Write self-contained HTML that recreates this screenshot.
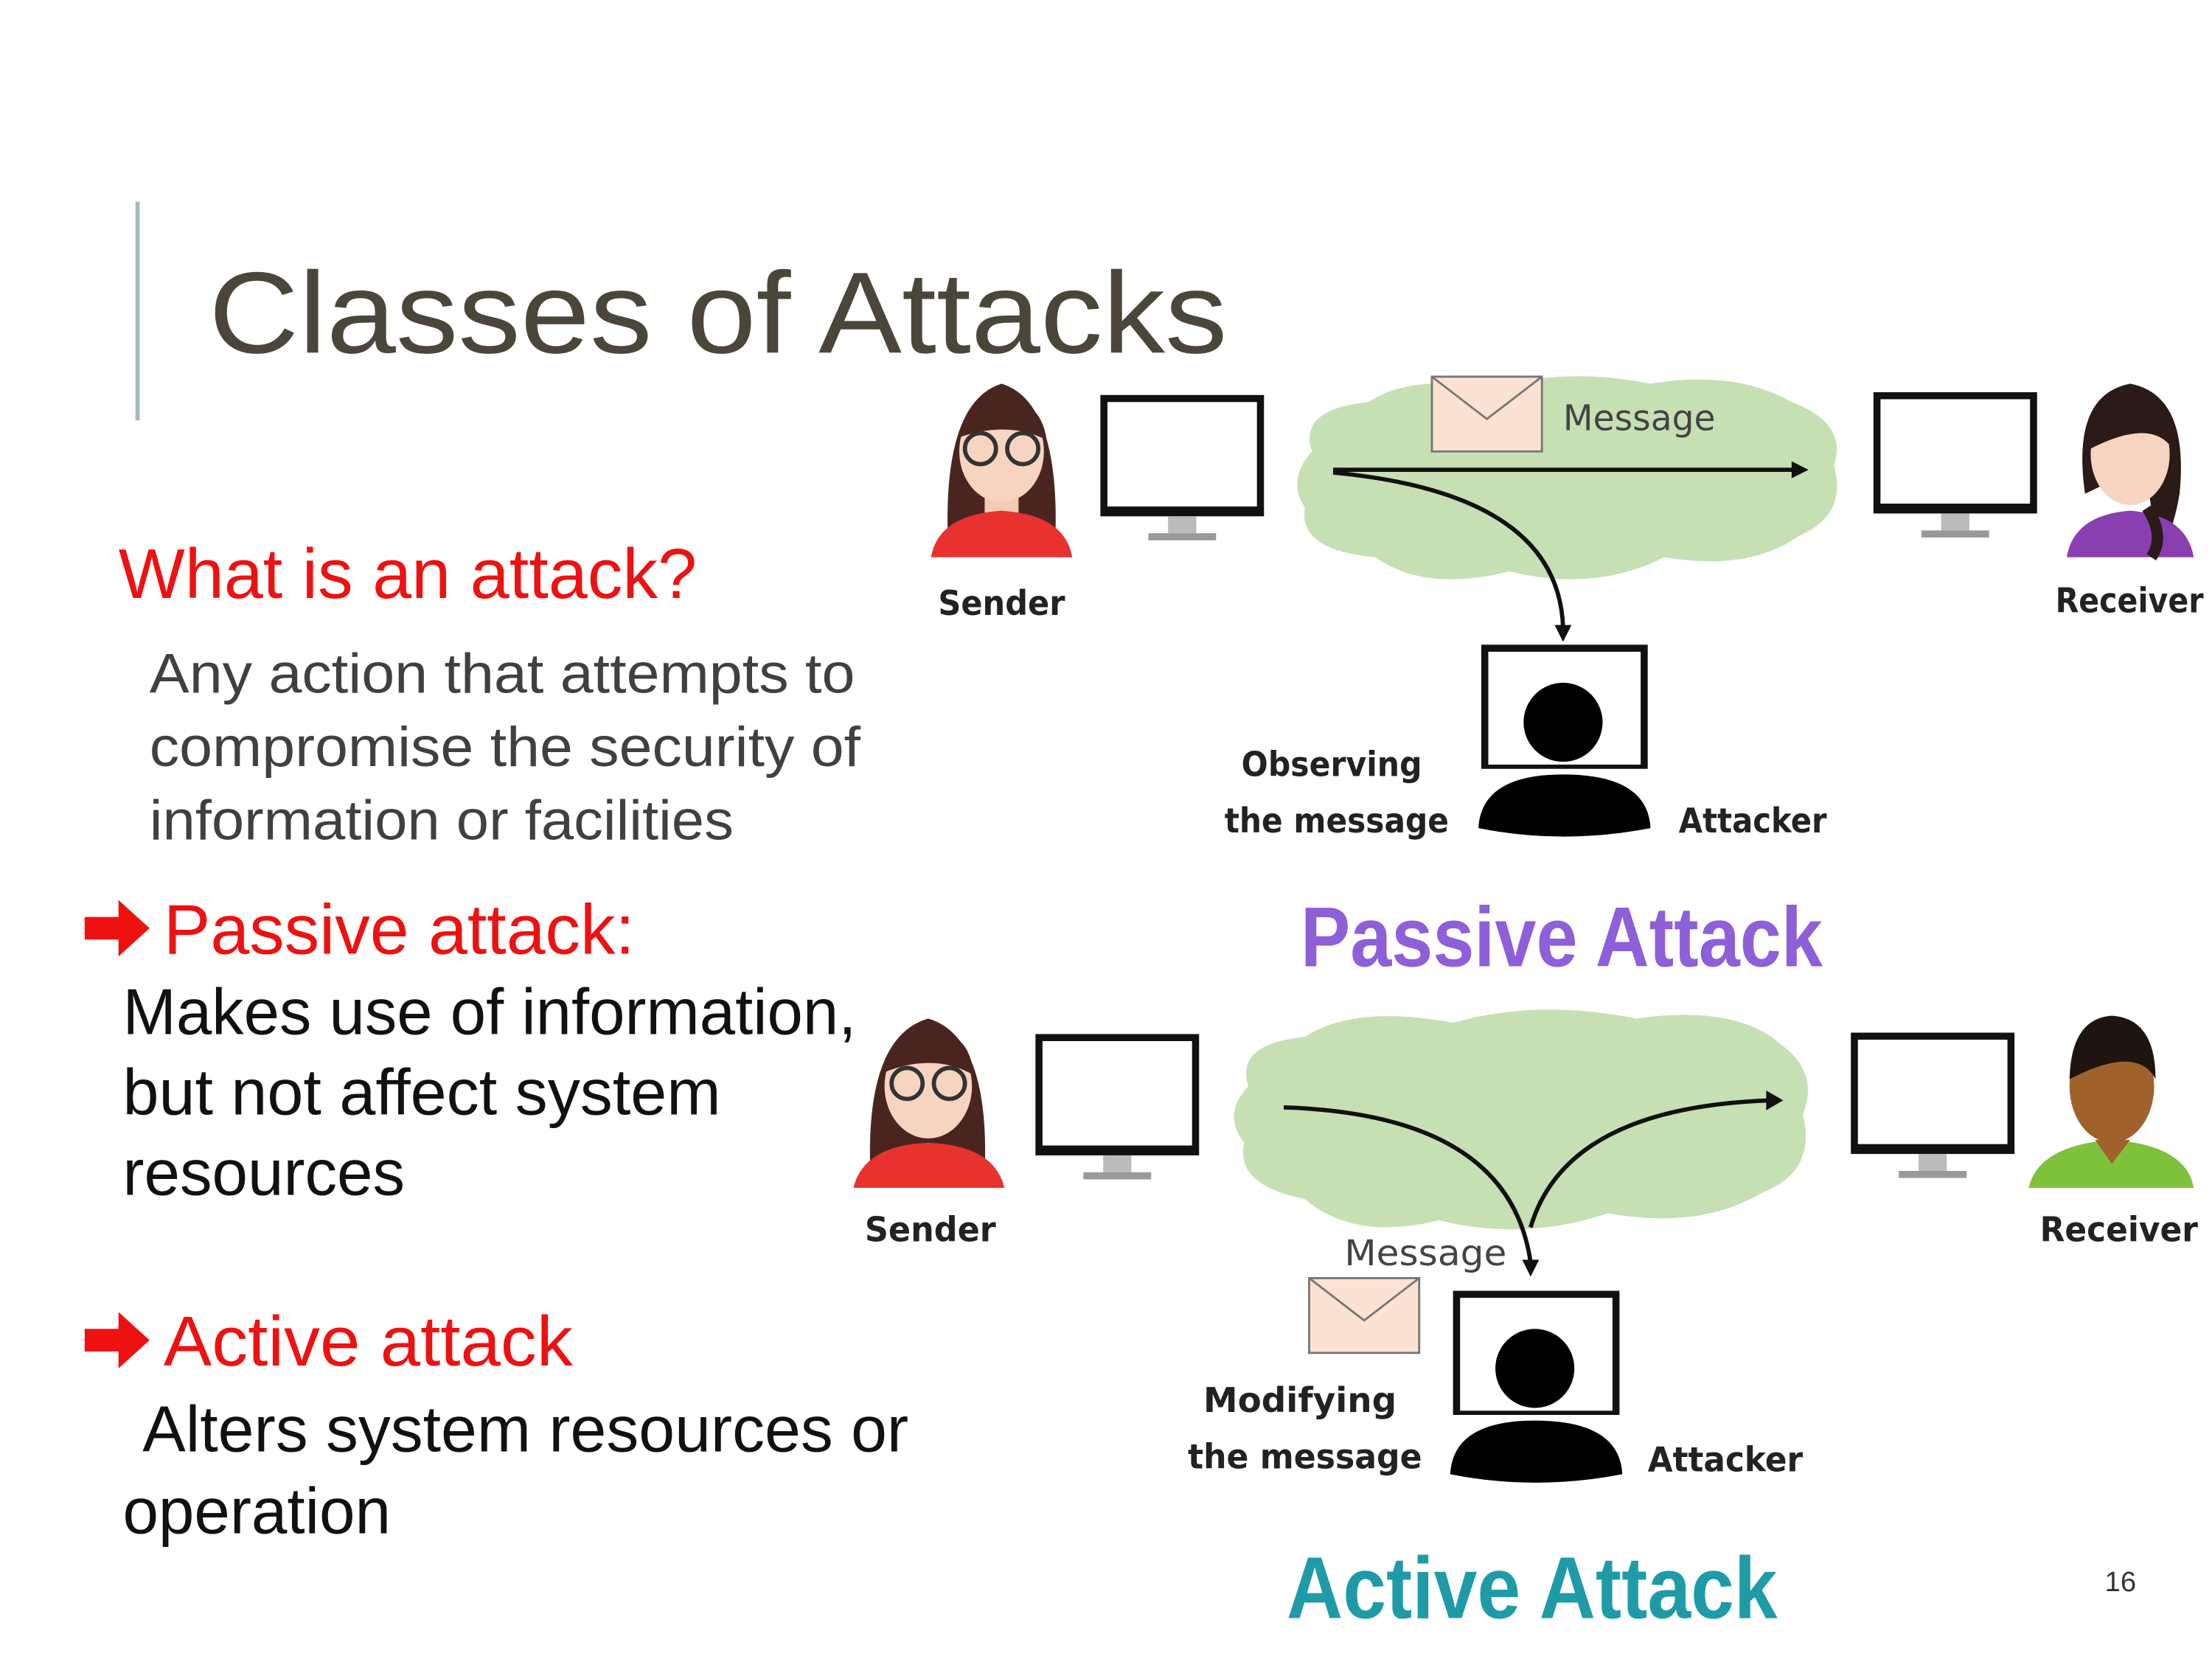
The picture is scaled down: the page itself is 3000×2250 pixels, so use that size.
<!DOCTYPE html>
<html><head><meta charset="utf-8"><style>
html,body{margin:0;padding:0;background:#fff;}
svg{display:block;}
</style></head><body>
<svg width="3000" height="2250" viewBox="0 0 1568 1176" preserveAspectRatio="none" xmlns="http://www.w3.org/2000/svg">
<rect width="1568" height="1176" fill="#fff"/>
<rect x="96" y="143" width="3" height="155" fill="#a3b8bb"/>
<text x="148" y="250" font-family="Liberation Sans, sans-serif" font-size="82" fill="#4a4639" textLength="722" lengthAdjust="spacingAndGlyphs">Classes of Attacks</text>

<g font-family="Liberation Sans Narrow, Liberation Sans, sans-serif">
<text x="84" y="424" font-size="50" fill="#ee1111" textLength="410" lengthAdjust="spacingAndGlyphs">What is an attack?</text>
<text x="106" y="491" font-size="40" fill="#404040" textLength="500" lengthAdjust="spacingAndGlyphs">Any action that attempts to</text>
<text x="106" y="543" font-size="40" fill="#404040" textLength="504" lengthAdjust="spacingAndGlyphs">compromise the security of</text>
<text x="106" y="595" font-size="40" fill="#404040" textLength="414" lengthAdjust="spacingAndGlyphs">information or facilities</text>
<path d="M60 650 L84 650 L84 638 L106 658 L84 678 L84 666 L60 666Z" fill="#ee1111"/>
<text x="116" y="676" font-size="50" fill="#ee1111" textLength="334" lengthAdjust="spacingAndGlyphs">Passive attack:</text>
<text x="87" y="733" font-size="46" fill="#111" textLength="520" lengthAdjust="spacingAndGlyphs">Makes use of information,</text>
<text x="87" y="790" font-size="46" fill="#111" textLength="424" lengthAdjust="spacingAndGlyphs">but not affect system</text>
<text x="87" y="847" font-size="46" fill="#111" textLength="200" lengthAdjust="spacingAndGlyphs">resources</text>
<path d="M60 942 L84 942 L84 930 L106 950 L84 970 L84 958 L60 958Z" fill="#ee1111"/>
<text x="116" y="968" font-size="50" fill="#ee1111" textLength="290" lengthAdjust="spacingAndGlyphs">Active attack</text>
<text x="101" y="1029" font-size="46" fill="#111" textLength="543" lengthAdjust="spacingAndGlyphs">Alters system resources or</text>
<text x="87" y="1087" font-size="46" fill="#111" textLength="190" lengthAdjust="spacingAndGlyphs">operation</text>
</g>
<text x="1492" y="1128" font-family="Liberation Sans, sans-serif" font-size="20" fill="#333">16</text>

<defs>
<g id="mon">
<rect x="0" y="0" width="116" height="86" fill="#111"/>
<rect x="5" y="5" width="106" height="74" fill="#fff"/>
<rect x="48" y="86" width="20" height="12" fill="#bbb"/>
<rect x="34" y="98" width="48" height="5" fill="#999"/>
</g>
<g id="atk">
<rect x="0" y="0" width="118" height="88" fill="#111"/>
<rect x="5" y="5" width="108" height="80" fill="#fff"/>
<circle cx="58" cy="55" r="28" fill="#000"/>
<path d="M-2 130 Q0 92 58 92 Q118 92 120 130 Q58 142 -2 130Z" fill="#000"/>
</g>
<g id="env">
<rect x="0" y="0" width="78" height="53" fill="#fbe2d3" stroke="#777" stroke-width="1.5"/>
<path d="M0 0 L39 30 L78 0" fill="none" stroke="#777" stroke-width="1.5"/>
</g>
</defs>

<g font-family="DejaVu Sans, sans-serif" font-weight="bold" font-size="24" fill="#222">
<text x="665" y="436" textLength="90" lengthAdjust="spacingAndGlyphs">Sender</text>
<text x="1457" y="434" textLength="105" lengthAdjust="spacingAndGlyphs">Receiver</text>
<text x="880" y="550" textLength="128" lengthAdjust="spacingAndGlyphs">Observing</text>
<text x="868" y="590" textLength="159" lengthAdjust="spacingAndGlyphs">the message</text>
<text x="1190" y="590" textLength="105" lengthAdjust="spacingAndGlyphs">Attacker</text>
<text x="613" y="880" textLength="93" lengthAdjust="spacingAndGlyphs">Sender</text>
<text x="1446" y="880" textLength="112" lengthAdjust="spacingAndGlyphs">Receiver</text>
<text x="853" y="1001" textLength="137" lengthAdjust="spacingAndGlyphs">Modifying</text>
<text x="842" y="1041" textLength="166" lengthAdjust="spacingAndGlyphs">the message</text>
<text x="1168" y="1043" textLength="110" lengthAdjust="spacingAndGlyphs">Attacker</text>
</g>

<!-- PASSIVE -->
<path d="M930 320 Q920 290 970 285 Q1000 265 1060 275 Q1110 260 1170 272 Q1230 262 1270 285 Q1310 300 1300 330 Q1310 365 1275 380 Q1240 405 1180 395 Q1130 420 1070 405 Q1010 420 975 395 Q920 390 925 360 Q912 340 930 320Z" fill="#c6e0b4"/>
<use href="#env" x="1015" y="267"/>
<text x="1108" y="305" font-family="DejaVu Sans, sans-serif" font-size="25" fill="#444" textLength="108" lengthAdjust="spacingAndGlyphs">Message</text>
<path d="M945 333 L1272 333" stroke="#111" stroke-width="3"/>
<path d="M1270 327 L1282 333 L1270 339Z" fill="#111"/>
<path d="M945 335 Q1105 350 1108 445" fill="none" stroke="#111" stroke-width="3"/>
<path d="M1102 443 L1108 455 L1114 443Z" fill="#111"/>
<path d="M672 385 Q668 285 710 272 Q752 285 748 385Z" fill="#4a2520"/>
<rect x="698" y="340" width="24" height="25" fill="#f3cbb3"/>
<ellipse cx="710" cy="320" rx="30" ry="36" fill="#f6d4c0"/>
<path d="M680 310 Q690 280 712 282 Q738 284 742 312 Q715 298 680 310Z" fill="#4a2520"/>
<circle cx="695" cy="318" r="11" fill="none" stroke="#333" stroke-width="3"/>
<circle cx="725" cy="318" r="11" fill="none" stroke="#333" stroke-width="3"/>
<path d="M660 395 Q665 365 710 362 Q755 365 760 395Z" fill="#e8322e"/>
<use href="#mon" x="780" y="280"/>
<use href="#mon" x="1328" y="278"/>
<path d="M1478 350 Q1468 280 1510 272 Q1552 280 1545 350 Q1540 380 1530 390 L1520 330Z" fill="#2a1a18"/>
<ellipse cx="1510" cy="322" rx="28" ry="36" fill="#f6d4c0"/>
<path d="M1482 318 Q1488 278 1512 280 Q1540 282 1540 318 Q1525 296 1482 318Z" fill="#2a1a18"/>
<path d="M1465 395 Q1470 365 1510 362 Q1550 365 1555 395Z" fill="#8a3fb0"/>
<path d="M1522 360 Q1535 380 1525 395" stroke="#2a1a18" stroke-width="8" fill="none"/>
<use href="#atk" x="1050" y="457"/>
<text x="922" y="685" font-family="Liberation Sans Narrow, Liberation Sans, sans-serif" font-weight="bold" font-size="60" fill="#8d5fd8" textLength="370" lengthAdjust="spacingAndGlyphs">Passive Attack</text>

<!-- ACTIVE -->
<path d="M885 770 Q875 740 925 735 Q960 712 1030 725 Q1090 708 1160 722 Q1230 712 1262 740 Q1290 760 1278 790 Q1288 830 1250 845 Q1205 872 1140 860 Q1080 880 1020 865 Q960 880 925 850 Q875 840 882 810 Q866 790 885 770Z" fill="#c6e0b4"/>
<path d="M910 785 Q1070 790 1085 895" fill="none" stroke="#111" stroke-width="3"/>
<path d="M1079 893 L1085 905 L1091 893Z" fill="#111"/>
<path d="M1085 870 Q1110 785 1255 780" fill="none" stroke="#111" stroke-width="3"/>
<path d="M1252 773 L1264 780 L1252 787Z" fill="#111"/>
<path d="M617 832 Q613 735 658 722 Q702 735 698 832Z" fill="#4a2520"/>
<ellipse cx="658" cy="770" rx="31" ry="37" fill="#f6d4c0"/>
<path d="M627 760 Q637 728 660 730 Q688 732 690 762 Q662 746 627 760Z" fill="#4a2520"/>
<circle cx="643" cy="768" r="11" fill="none" stroke="#333" stroke-width="3"/>
<circle cx="673" cy="768" r="11" fill="none" stroke="#333" stroke-width="3"/>
<path d="M605 842 Q612 812 658 810 Q705 812 712 842Z" fill="#e8322e"/>
<use href="#mon" x="734" y="733"/>
<use href="#mon" x="1312" y="732"/>
<ellipse cx="1497" cy="770" rx="30" ry="40" fill="#a0622d"/>
<path d="M1467 765 Q1468 722 1497 720 Q1528 722 1528 765 Q1515 740 1467 765Z" fill="#1e1410"/>
<path d="M1438 842 Q1445 812 1497 808 Q1550 812 1555 842Z" fill="#7ec13a"/>
<path d="M1485 808 L1497 825 L1510 808Z" fill="#a0622d"/>
<text x="953" y="897" font-family="DejaVu Sans, sans-serif" font-size="25" fill="#444" textLength="115" lengthAdjust="spacingAndGlyphs">Message</text>
<use href="#env" x="928" y="906"/>
<use href="#atk" x="1030" y="915"/>
<text x="912" y="1147" font-family="Liberation Sans Narrow, Liberation Sans, sans-serif" font-weight="bold" font-size="62" fill="#1f9ba8" textLength="348" lengthAdjust="spacingAndGlyphs">Active Attack</text>
</svg>
</body></html>
